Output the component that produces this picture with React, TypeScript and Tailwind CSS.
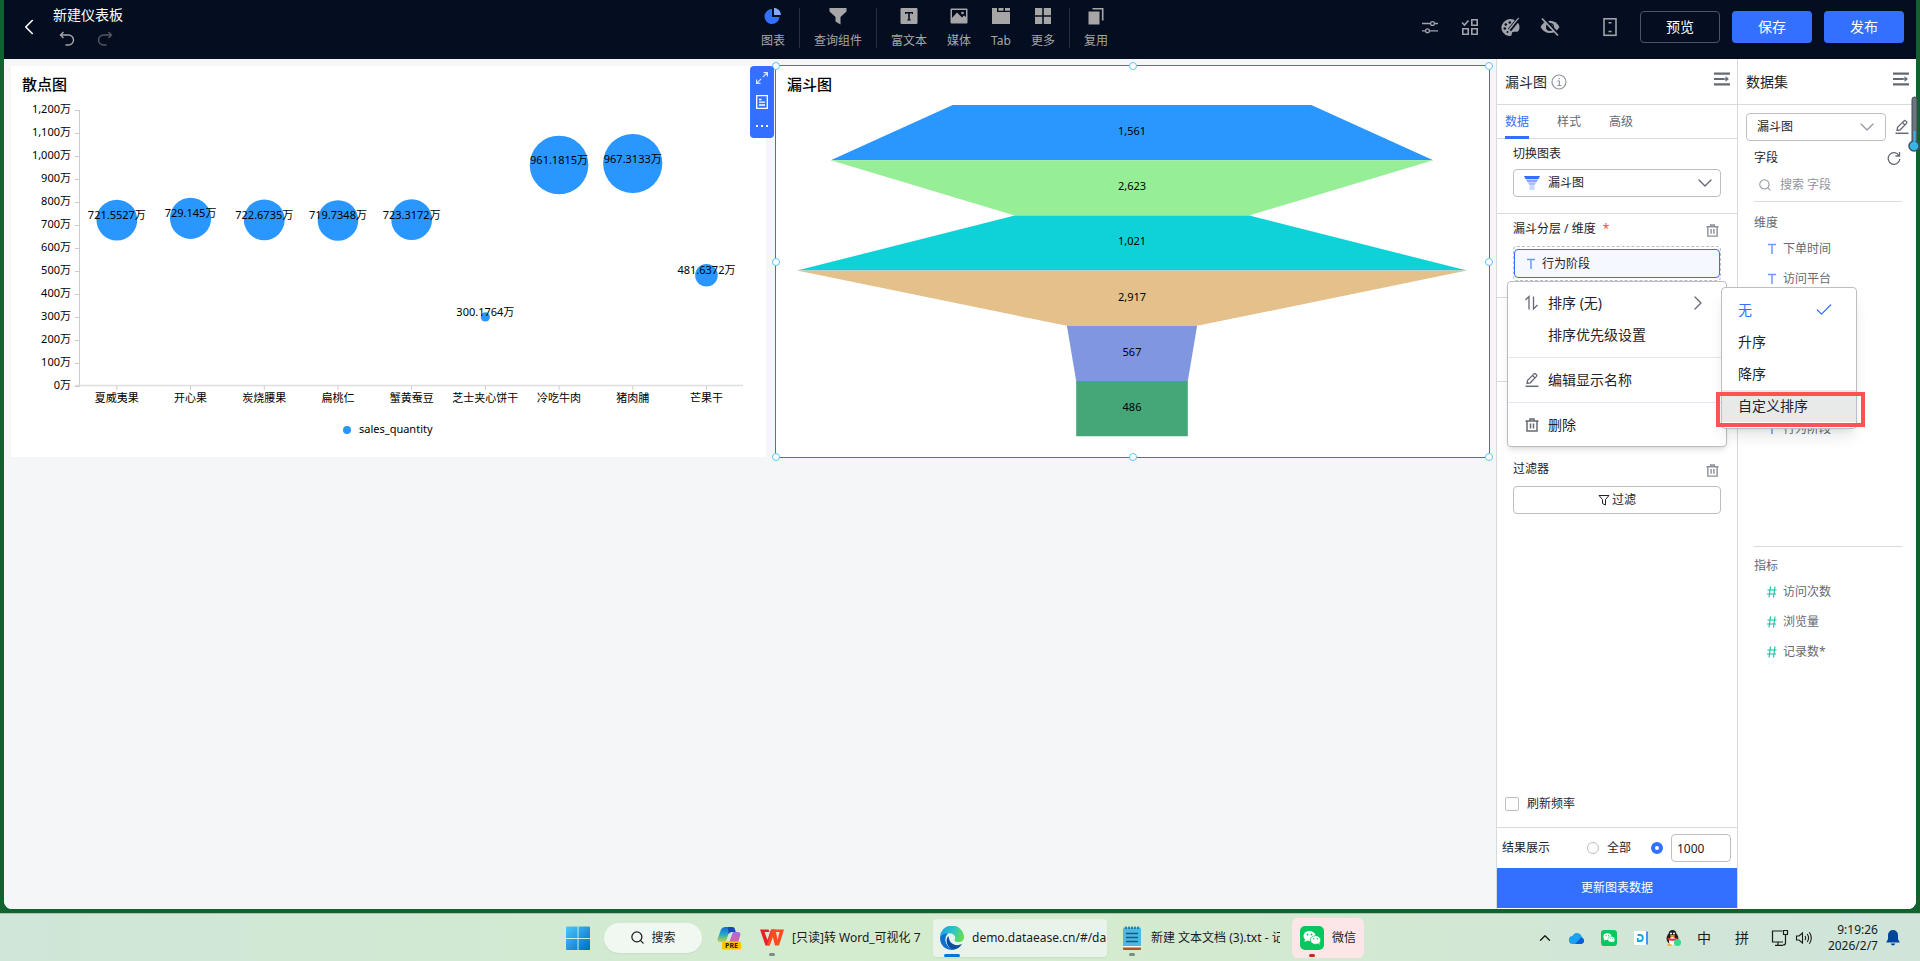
import type { ReactNode } from 'react';
import { ChevronDown, ChevronLeft, ChevronRight, ChevronUp, Check, Search } from 'lucide-react';

type Point = { name: string; value: number; r: number };

const scatter: Point[] = [
  { name: '夏威夷果', value: 721.5527, r: 20.4 },
  { name: '开心果', value: 729.145, r: 20.6 },
  { name: '炭烧腰果', value: 722.6735, r: 20.4 },
  { name: '扁桃仁', value: 719.7348, r: 20.3 },
  { name: '蟹黄蚕豆', value: 723.3172, r: 20.4 },
  { name: '芝士夹心饼干', value: 300.1764, r: 4.6 },
  { name: '冷吃牛肉', value: 961.1815, r: 29.3 },
  { name: '猪肉脯', value: 967.3133, r: 29.6 },
  { name: '芒果干', value: 481.6372, r: 11.3 },
];

const funnel = [
  { value: 1561, color: '#2997ff' },
  { value: 2623, color: '#96ef96' },
  { value: 1021, color: '#0fd2d8' },
  { value: 2917, color: '#e4c08a' },
  { value: 567, color: '#8096e0' },
  { value: 486, color: '#45a678' },
];

const ticks = [1200, 1100, 1000, 900, 800, 700, 600, 500, 400, 300, 200, 100, 0];

function ScatterChart() {
  const left = 69;
  const base = 286;
  const step = 73.7;
  const y = (v: number) => base - (v / 1200) * 276;
  return (
    <svg viewBox="0 0 755 357" className="block w-full text-[11px]" fill="#000">
      <path d={`M${left - 0.5} 10V${base}`} stroke="#ccc" />
      <path d={`M${left - 5} ${base - 0.5}H732`} stroke="#ddd" strokeWidth="1.5" />
      {ticks.map(t => (
        <g key={t}>
          <path d={`M${left - 5} ${y(t) + 0.5}h5`} stroke="#ccc" />
          <text x={left - 9} y={y(t) + 3} textAnchor="end">{t.toLocaleString('en-US')}万</text>
        </g>
      ))}
      {scatter.map((p, i) => {
        const x = left + step * (i + 0.5);
        return (
          <g key={p.name}>
            <path d={`M${x} ${base}v4`} stroke="#ccc" />
            <circle cx={x} cy={y(p.value)} r={p.r} fill="#2997ff" />
            <text x={x} y={base + 16} textAnchor="middle">{p.name}</text>
          </g>
        );
      })}
      {scatter.map((p, i) => (
        <text key={p.name} x={left + step * (i + 0.5)} y={y(p.value) - 1} textAnchor="middle">{p.value}万</text>
      ))}
      <circle cx="336" cy="330" r="4" fill="#2997ff" />
      <text x="348" y="333">sales_quantity</text>
    </svg>
  );
}

function FunnelChart() {
  const cx = 356;
  const half = (v: number) => (v / 2917) * 335;
  const h = 55.2;
  return (
    <svg viewBox="0 0 713 357" className="block w-full text-[11px]" fill="#000">
      {funnel.map((f, i) => {
        const top = 5 + i * h;
        const a = half(f.value);
        const b = half((funnel[i + 1] ?? f).value);
        return (
          <g key={f.value}>
            <polygon points={`${cx - a},${top} ${cx + a},${top} ${cx + b},${top + h} ${cx - b},${top + h}`} fill={f.color} />
            <text x={cx} y={top + 30} textAnchor="middle">{f.value.toLocaleString('en-US')}</text>
          </g>
        );
      })}
    </svg>
  );
}

function Tool({ label, children }: { label: string; children: ReactNode }) {
  return (
    <button className="flex flex-col items-center gap-2 text-xs leading-4 text-[#a6a6a6]">
      <svg width="18" height="18" viewBox="0 0 18 18" fill="#a6a6a6">{children}</svg>
      {label}
    </button>
  );
}

function Divider() {
  return <span className="mx-[14px] h-10 w-px bg-[#262e3f]" />;
}

function Trash({ size = 14, color = '#8a8f98' }: { size?: number; color?: string }) {
  return (
    <svg width={size} height={size} viewBox="0 0 14 14" fill="none" stroke={color} strokeWidth="1.5">
      <path d="M.5 3h13M5 2.500V1h4v1.500M2 3v10h10V3M5.500 5.500v5M8.500 5.500v5" />
    </svg>
  );
}

function Pencil({ color = '#646a73' }: { color?: string }) {
  return (
    <svg width="16" height="16" viewBox="0 0 16 16" fill="none" stroke={color} strokeWidth="1.3">
      <path d="M3 11.500l.6-3.200L10 1.900q.8-.7 1.600 0l.9.9q.7.8 0 1.600L6.200 10.800z" />
      <path d="M8.500 3.500l2.500 2.500" />
      <path d="M1.500 14.300h13" strokeWidth="1.500" />
    </svg>
  );
}

function FoldIcon() {
  return (
    <svg width="16" height="14" viewBox="0 0 16 14" fill="#646a73">
      <path d="M0 .5h16v2.200H0zM0 5.900h10.500v2.200H0zM0 11.300h16v2.200H0zM9 6.400h3.500v1.200H9zM11.500 4.200L15 7l-3.500 2.800z" />
    </svg>
  );
}

function Handle({ className }: { className: string }) {
  return <span className={`absolute size-2 rounded-full border border-[#59c7f9] bg-white ${className}`} />;
}

function Header() {
  return (
    <header className="grid h-[59px] shrink-0 grid-cols-[1fr_auto_1fr] items-center bg-[#050e21]">
      <div className="flex items-center">
        <button aria-label="返回" className="ml-3 text-white"><ChevronLeft size={26} strokeWidth={1.5} className="mt-[-5px]" /></button>
        <div className="ml-[11px] flex flex-col pb-1.5">
          <h1 className="text-sm leading-4 text-white">新建仪表板</h1>
          <div className="mt-2 flex gap-[22px] pl-1.5">
            <button aria-label="撤销">
              <svg width="16" height="16" viewBox="0 0 16 16" fill="none" stroke="#a6a6a6" strokeWidth="1.400">
                <path d="M4.500 1L1.500 4l3 3M1.500 4h8a5 5 0 0 1 0 10H6.500" />
              </svg>
            </button>
            <button aria-label="重做">
              <svg width="16" height="16" viewBox="0 0 16 16" fill="none" stroke="#55585f" strokeWidth="1.400">
                <path d="M11.500 1l3 3-3 3M14.500 4h-8a5 5 0 0 0 0 10h3" />
              </svg>
            </button>
          </div>
        </div>
      </div>

      <nav className="flex items-center pr-[51px] pb-[3px]">
        <Tool label="图表">
          <path d="M8 2a7.500 7.500 0 1 0 7.500 8H8z" fill="#3370ff" />
          <path d="M10 .8A7.500 7.500 0 0 1 17 8h-7z" fill="#85a9ff" />
        </Tool>
        <Divider />
        <Tool label="查询组件"><path d="M.5 1h17v3.500L11.500 10v7.500L6.500 14.500V10L.5 4.500z" /></Tool>
        <Divider />
        <div className="flex gap-5">
          <Tool label="富文本">
            <rect x=".5" y="1" width="17" height="16" rx="1" />
            <path d="M5 5h8v2H12V6.500H9.800v6h1v1H7.200v-1h1v-6H6V7H5z" fill="#050e21" />
          </Tool>
          <Tool label="媒体">
            <rect x=".5" y="1.500" width="17" height="15" rx="1" />
            <path d="M2 3h14v7l-2-1.500-2 2-5-5-5 5.500z" fill="#050e21" />
            <circle cx="12.500" cy="6" r="1.300" />
          </Tool>
          <Tool label="Tab"><path d="M0 1h5v4h13v12H0zM6.500 1h5v2.800h-5zM13 1h5v2.800h-5z" /></Tool>
          <Tool label="更多"><path d="M1 1h7.200v7.200H1zM9.800 1H17v7.200H9.800zM1 9.800h7.200V17H1zM9.800 9.800H17V17H9.800z" /></Tool>
        </div>
        <Divider />
        <Tool label="复用"><path d="M1.500 4.500h11v13h-11zM5.500 1h11v12.500h-1.600V2.600H5.500z" /></Tool>
      </nav>

      <div className="flex items-center justify-end gap-3 pr-3 pb-[5px]">
        <div className="mr-7 flex gap-5">
          <svg width="20" height="20" viewBox="0 0 20 20" fill="none" stroke="#a0a3a9" strokeWidth="1.300">
            <path d="M2 6.500h8.500M14.500 6.500H18M2 13.800h3.500M9.500 13.800H18" />
            <circle cx="12.500" cy="6.500" r="1.900" />
            <circle cx="7.500" cy="13.800" r="1.900" />
          </svg>
          <svg width="20" height="20" viewBox="0 0 20 20" fill="none" stroke="#a0a3a9" strokeWidth="1.600">
            <path d="M2 5.500l2.500 2.500L8.500 3.500M11.800 2.800h5.400v5.400h-5.400zM2.800 11.800h5.400v5.400H2.800zM11.800 11.800h5.400v5.400h-5.400z" />
          </svg>
          <svg width="20" height="20" viewBox="0 0 20 20">
            <path d="M14 2.800A9 8.500 0 1 0 9 19q3 .3 2.700-2-.2-2.300 2.300-2.300h3Q19.500 14 19.500 10q0-2-1-3.500z" fill="#a0a3a9" />
            <g fill="#050e21">
              <circle cx="4.800" cy="11.500" r="1.300" /><circle cx="5.800" cy="7.500" r="1.300" /><circle cx="9.800" cy="5.500" r="1.300" /><circle cx="7.500" cy="15" r="1" />
            </g>
            <path d="M18.500 2L9.500 13" stroke="#050e21" strokeWidth="4" />
            <path d="M19.500.8L11 11.500q-1.500 1-2.500 2.500.2-2.500 1.500-3.800L17.800 1z" fill="#a0a3a9" />
          </svg>
          <svg width="20" height="20" viewBox="0 0 20 20">
            <path d="M.5 10Q4 3.800 10 3.800T19.500 10Q16 16 10 16T.5 10z" fill="#a0a3a9" />
            <circle cx="10" cy="10" r="4" fill="#050e21" />
            <circle cx="11" cy="9.500" r="2" fill="#a0a3a9" />
            <path d="M3.500.5l15.500 17" stroke="#050e21" strokeWidth="2" />
            <path d="M2 1.500l16 17" stroke="#a0a3a9" strokeWidth="1.800" />
          </svg>
        </div>
        <svg width="20" height="20" viewBox="0 0 20 20" fill="none" stroke="#a0a3a9" strokeWidth="1.600" className="mr-2">
          <rect x="4" y="1.800" width="12" height="16.500" />
          <path d="M8.500 5.800h3M8.500 14.500h3" />
        </svg>
        <button className="h-8 w-20 rounded-sm border border-[#4d5463] text-sm text-white">预览</button>
        <button className="h-8 w-20 rounded-sm bg-[#3370ff] text-sm text-white">保存</button>
        <button className="h-8 w-20 rounded-sm bg-[#3370ff] text-sm text-white">发布</button>
      </div>
    </header>
  );
}

function Canvas() {
  return (
    <main className="min-w-0 flex-1 bg-[#f5f6f7] pt-1.5 pr-1.5 pl-[7px]">
      <div className="grid grid-cols-[755fr_715fr] items-start gap-[9px]">
        <section className="mt-px bg-white">
          <h2 className="px-[11px] pt-2 pb-1.5 text-[15px] leading-5 font-medium text-black">散点图</h2>
          <ScatterChart />
        </section>
        <section className="relative border border-[#3370ff] bg-white">
          <h2 className="px-[11px] pt-2 pb-1.5 text-[15px] leading-5 font-medium text-black">漏斗图</h2>
          <FunnelChart />
          <Handle className="-top-1 -left-1" />
          <Handle className="-top-1 left-1/2 -translate-x-1/2" />
          <Handle className="-top-1 -right-1" />
          <Handle className="top-1/2 -left-1 -translate-y-1/2" />
          <Handle className="top-1/2 -right-1 -translate-y-1/2" />
          <Handle className="-bottom-1 -left-1" />
          <Handle className="-bottom-1 left-1/2 -translate-x-1/2" />
          <Handle className="-right-1 -bottom-1" />
          <div className="absolute top-0 right-full mr-0.5 flex w-6 flex-col rounded-sm bg-[#3370ff]">
            <button aria-label="放大" className="flex h-6 items-center justify-center">
              <svg width="12" height="12" viewBox="0 0 12 12" fill="none" stroke="#d6e2ff" strokeWidth="1.200">
                <path d="M7.500.6h3.900v3.900M11.200.8L6.800 5.200M4.500 11.400H.6V7.500M.8 11.200l4.400-4.400" />
              </svg>
            </button>
            <button aria-label="查看数据" className="flex h-6 items-center justify-center">
              <svg width="12" height="14" viewBox="0 0 12 14" fill="none" stroke="#fff" strokeWidth="1.300">
                <path d="M.7.7h10.600v12.600H.7zM3 4.500h2.500M3 7.200h6M3 10h6" />
              </svg>
            </button>
            <button aria-label="更多" className="flex h-6 items-center justify-center gap-[3px]">
              <span className="size-0.5 bg-white" /><span className="size-0.5 bg-white" /><span className="size-0.5 bg-white" />
            </button>
          </div>
        </section>
      </div>
    </main>
  );
}

function SortSubmenu() {
  return (
    <div className="absolute top-[5px] left-[213px] w-34 rounded-sm border border-[#bbbfc4] bg-white py-1.5 text-sm text-[#1f2329] shadow-lg">
      <button className="flex h-8 w-full items-center justify-between pr-[22px] pl-4 text-[#3370ff]">
        无<Check size={20} strokeWidth={1.5} />
      </button>
      <button className="flex h-8 w-full items-center pl-4">升序</button>
      <button className="flex h-8 w-full items-center pl-4">降序</button>
      <button className="relative flex h-8 w-full items-center bg-[#e8e9e9] pl-4">
        自定义排序
        <span className="absolute top-0.5 -right-[9px] -bottom-[5px] -left-1.5 border-4 border-[#ff5252]" />
      </button>
    </div>
  );
}

function FieldMenu() {
  return (
    <div className="absolute top-full -left-[7px] z-20 mt-px w-55 rounded-sm border border-[#bbbfc4] bg-white py-[5px] text-sm text-[#1f2329] shadow-md">
      <button className="flex h-8 w-full items-center gap-2 pr-4 pl-4">
        <svg width="16" height="16" viewBox="0 0 16 16" fill="none" stroke="#646a73" strokeWidth="1.300">
          <path d="M1.500 5L5 1.500V14.500M9.500 1.500V14l4-4" />
        </svg>
        <span className="flex-1 text-left">排序 (无)</span>
        <ChevronRight size={24} strokeWidth={1.3} color="#646a73" />
      </button>
      <button className="flex h-8 w-full items-center pl-10">排序优先级设置</button>
      <hr className="my-1.5 border-[#e4e7ef]" />
      <button className="flex h-8 w-full items-center gap-2 pl-4"><Pencil />编辑显示名称</button>
      <hr className="my-1.5 border-[#e4e7ef]" />
      <button className="flex h-8 w-full items-center gap-2 pl-4">
        <span className="px-px"><Trash color="#646a73" /></span>删除
      </button>
      <SortSubmenu />
    </div>
  );
}

function ChartPanel() {
  return (
    <aside className="relative z-10 flex w-[241px] shrink-0 flex-col border-l border-[#d9dadc] bg-white text-xs text-[#1f2329]">
      <div className="flex h-[46px] items-center justify-between border-b border-[#d9dadc] pr-[7px] pl-2">
        <h2 className="flex items-center gap-1 text-sm">
          漏斗图
          <svg width="16" height="16" viewBox="0 0 16 16" fill="none" stroke="#8f959e" strokeWidth="1.200">
            <circle cx="8" cy="8" r="7" />
            <path d="M6.500 7H8.300v4.500M6.300 11.500h4M7.500 4.700h1.300" />
          </svg>
        </h2>
        <button aria-label="收起" className="pb-1.5"><FoldIcon /></button>
      </div>
      <div className="flex h-[34px] gap-7 border-b border-[#d9dadc] pl-2 text-[#646a73]">
        <button className="-mb-px border-b-3 border-[#3370ff] pt-[3px] text-[#3370ff]">数据</button>
        <button>样式</button>
        <button>高级</button>
      </div>

      <div className="border-b border-[#d9dadc] px-4 pt-1.5 pb-4">
        <label htmlFor="chart-type" className="block h-6 leading-[18px]">切换图表</label>
        <div className="relative">
          <select id="chart-type" className="block h-7 w-full appearance-none rounded-sm border border-[#bbbfc4] bg-white pl-[34px] text-xs">
            <option>漏斗图</option>
          </select>
          <svg width="18" height="14" viewBox="0 0 18 14" className="absolute top-[7px] left-[10px]">
            <path d="M1 0h16l-1.500 3h-13z" fill="#3370ff" />
            <path d="M2.800 3.500h12.400l-2 3H4.800z" fill="#85a9ff" />
            <path d="M5.200 7h7.600l-1.400 2.500H6.600z" fill="#a6c0ff" />
            <path d="M6.500 10h5v4h-5z" fill="#c7d8ff" />
          </svg>
          <ChevronDown size={24} strokeWidth={1.4} color="#646a73" className="pointer-events-none absolute top-0.5 right-1" />
        </div>
      </div>

      <div className="border-b border-[#d9dadc] px-4 pt-1.5 pb-4">
        <div className="flex h-[26px] items-start justify-between pr-0.5">
          <span className="leading-[18px]">漏斗分层 / 维度 <span className="ml-1 text-[#f54a45]">*</span></span>
          <button aria-label="清空维度" className="pt-1"><Trash size={13} /></button>
        </div>
        <div className="relative rounded-sm border border-dashed border-[#bbbfc4] py-0.5">
          <button className="flex h-[29px] w-full items-center gap-1.5 rounded-sm border border-[#3370ff] bg-[#f5f8ff] pl-[11px] text-xs">
            <TextIcon />行为阶段
          </button>
          <FieldMenu />
        </div>
      </div>
      <div className="h-[84px] border-b border-[#d9dadc]" />

      <div className="px-4 pt-[78px]">
        <div className="flex h-[26px] items-start justify-between pr-0.5">
          <span className="leading-[18px]">过滤器</span>
          <button aria-label="清空过滤器" className="pt-1"><Trash size={13} /></button>
        </div>
        <button className="flex h-7 w-full items-center justify-center gap-0.5 rounded-sm border border-[#bbbfc4]">
          <svg width="12" height="12" viewBox="0 0 12 12" fill="none" stroke="#1f2329">
            <path d="M1 1.500h10L7.500 5.500v5.500l-3-1.500v-4z" />
          </svg>
          过滤
        </button>
      </div>

      <div className="mt-auto border-b border-[#d9dadc] px-2 pb-[14px]">
        <label className="flex items-center gap-2 leading-[18px]">
          <input type="checkbox" className="size-[14px] appearance-none rounded-xs border border-[#bbbfc4]" />
          刷新频率
        </label>
      </div>
      <div className="flex h-10 items-center pr-1.5 pl-[5px]">
        <span className="flex-1">结果展示</span>
        <label className="flex items-center gap-2">
          <input type="radio" name="limit" className="size-3 appearance-none rounded-full border border-[#bbbfc4]" />
          全部
        </label>
        <input type="radio" name="limit" aria-label="自定义条数" defaultChecked className="ml-5 size-3 appearance-none rounded-full border-4 border-[#3370ff] bg-white" />
        <input aria-label="条数" defaultValue="1000" className="ml-2 h-7 w-15 rounded-sm border border-[#bbbfc4] px-[5px] text-xs" />
      </div>
      <button className="mb-px h-10 shrink-0 bg-[#3370ff] text-white">更新图表数据</button>
    </aside>
  );
}

function TextIcon() {
  return (
    <svg width="10" height="12" viewBox="0 0 10 12" fill="none" stroke="#6f98ff" strokeWidth="1.500">
      <path d="M1 1.500h8M5 1.500V11" />
    </svg>
  );
}

function HashIcon() {
  return (
    <svg width="10" height="12" viewBox="0 0 10 12" fill="none" stroke="#14c0a5" strokeWidth="1.100">
      <path d="M3.500.5L2 11.500M8 .5L6.500 11.500M.5 4h9M0 8h9" />
    </svg>
  );
}

function Field({ icon, name }: { icon: ReactNode; name: string }) {
  return <li className="flex h-[30px] items-center gap-1.5 pl-[13px]">{icon}{name}</li>;
}

function DatasetPanel() {
  return (
    <aside className="flex w-[179px] shrink-0 flex-col border-l border-[#d9dadc] bg-white text-xs text-[#1f2329]">
      <div className="flex h-[46px] shrink-0 items-center justify-between border-b border-[#d9dadc] pr-[7px] pl-2">
        <h2 className="text-sm">数据集</h2>
        <button aria-label="收起" className="pb-1.5"><FoldIcon /></button>
      </div>
      <div className="flex items-center gap-2 px-2 pt-2">
        <div className="relative w-35 shrink-0">
          <select aria-label="数据集" className="block h-7 w-full appearance-none rounded-sm border border-[#bbbfc4] bg-white pl-[10px] text-xs">
            <option>漏斗图</option>
          </select>
          <ChevronDown size={24} strokeWidth={1.2} color="#8f959e" className="pointer-events-none absolute top-0.5 right-[7px]" />
        </div>
        <button aria-label="编辑数据集" className="shrink-0"><Pencil /></button>
      </div>
      <div className="flex items-center justify-between pt-2 pr-[15px] pl-4 leading-[18px]">
        字段
        <button aria-label="刷新">
          <svg width="14" height="14" viewBox="0 0 14 14" fill="none" stroke="#646a73" strokeWidth="1.300">
            <path d="M12 4.500A5.800 5.800 0 1 0 12.800 8M12.500 1v4h-4" />
          </svg>
        </button>
      </div>
      <label className="mr-[14px] ml-4 flex h-[35px] items-center gap-2 border-b border-[#d9dadc] pt-0.5 pl-1">
        <Search size={14} strokeWidth={1.8} color="#8f959e" className="shrink-0" />
        <input placeholder="搜索 字段" className="w-full min-w-0 text-xs placeholder:text-[#8f959e]" />
      </label>
      <div className="mr-[14px] ml-4 text-[#646a73]">
        <h3 className="pt-3 leading-[18px]">维度</h3>
        <ul className="pt-0.5">
          <Field icon={<TextIcon />} name="下单时间" />
          <Field icon={<TextIcon />} name="访问平台" />
        </ul>
        <ul className="mt-30 border-b border-[#d9dadc] pb-[102px]">
          <Field icon={<TextIcon />} name="行为阶段" />
        </ul>
        <h3 className="pt-2.5 leading-[18px]">指标</h3>
        <ul className="pt-0.5">
          <Field icon={<HashIcon />} name="访问次数" />
          <Field icon={<HashIcon />} name="浏览量" />
          <Field icon={<HashIcon />} name="记录数*" />
        </ul>
      </div>
    </aside>
  );
}

function WeChatIcon({ size }: { size: number }) {
  return (
    <svg width={size} height={size} viewBox="0 0 24 24" className="shrink-0">
      <rect width="24" height="24" rx="5" fill="#07c75f" />
      <ellipse cx="9.500" cy="10" rx="6" ry="5" fill="#fff" />
      <path d="M5 13l-.5 3 3-1.500z" fill="#fff" />
      <ellipse cx="15.500" cy="14" rx="5.200" ry="4.300" fill="#fff" stroke="#07c75f" strokeWidth=".7" />
      <path d="M18 17l1.500 2-.2-3z" fill="#fff" />
      <g fill="#07c75f">
        <circle cx="7.500" cy="8.500" r=".9" /><circle cx="11.500" cy="8.500" r=".9" />
        <circle cx="13.800" cy="12.800" r=".7" /><circle cx="17.200" cy="12.800" r=".7" />
      </g>
    </svg>
  );
}

function Taskbar() {
  return (
    <footer className="grid h-12 shrink-0 grid-cols-[1fr_auto_1fr] items-center border-t border-[#a9c4b0] bg-linear-to-r from-[#cfe6d8] via-[#d4eccd] to-[#d0e4da] text-xs text-[#1b1b1b]">
      <span />
      <div className="flex h-full items-center pl-2.5">
        <button aria-label="开始">
          <svg width="24" height="24" viewBox="0 0 24 24">
            <defs>
              <linearGradient id="win" x1="0" y1="0" x2="1" y2="1">
                <stop offset="0" stopColor="#4cc9fb" /><stop offset="1" stopColor="#0067c8" />
              </linearGradient>
            </defs>
            <path d="M0 1.500Q0 .5 1 .5h10.500v11.500H0zM12.500.5H23q1 0 1 1V12H12.500zM0 13h11.500v11H1q-1 0-1-1zM12.500 13H24v10q0 1-1 1H12.500z" fill="url(#win)" />
          </svg>
        </button>
        <button className="ml-[14px] flex h-[30px] w-[98px] items-center justify-center gap-1.5 rounded-full bg-[#f0f8f1] shadow-xs">
          <Search size={15} strokeWidth={2} />搜索
        </button>
        <button aria-label="Copilot" className="ml-[15px]">
          <svg width="24" height="24" viewBox="0 0 24 24">
            <defs>
              <linearGradient id="cop1" x1="0" y1="0" x2="0" y2="1">
                <stop offset="0" stopColor="#1668d8" /><stop offset=".5" stopColor="#25a9c8" /><stop offset="1" stopColor="#c9d33c" />
              </linearGradient>
              <linearGradient id="cop2" x1="0" y1="0" x2="0" y2="1">
                <stop offset="0" stopColor="#a26bf0" /><stop offset="1" stopColor="#f2607c" />
              </linearGradient>
            </defs>
            <path d="M8 1h7q2.500 0 3 3l.6 2h-4Q12 6 11 9l-1.500 5q-.6 2-2.500 2H3Q0 16 .6 13L4 3.500Q5 1 8 1z" fill="url(#cop1)" />
            <path d="M16 6h4.500Q24 6 23.300 9l-2 7q-.8 3-3.300 3H9q2.500-.5 3.300-3z" fill="url(#cop2)" />
            <path d="M11 1h4q2.500 0 3 3l.6 2h-4q-2 0-3 2z" fill="#1746b8" />
            <rect x="5" y="15.500" width="19" height="8" rx="1.500" fill="#ffc400" />
            <text x="14.500" y="22" textAnchor="middle" className="text-[7px] font-bold" fill="#222">PRE</text>
          </svg>
        </button>
        <button className="relative ml-[19px] flex h-10 w-[173px] items-center gap-2">
          <svg width="24" height="17" viewBox="0 0 24 17" className="shrink-0">
            <path d="M0 .5h8.500l1 2.500H4.500l3 8L11 .5h4.500L9.500 16.500H5.500z" fill="#e8202a" />
            <path d="M11.500.5h4l2 10.500 2-8h-4.500l.8-2.500H24L19 16.500h-4l-2.300-9-3.200 9H7z" fill="#ff4a1f" />
          </svg>
          <span className="whitespace-nowrap">[只读]转 Word_可视化 7</span>
          <span className="absolute bottom-0.5 left-[9px] h-[3px] w-1.5 rounded-full bg-[#7c8a80]" />
        </button>
        <button className="relative flex h-[38px] w-[174px] items-center gap-2 rounded-sm bg-[#e8f3ea] pl-[7px] shadow-xs">
          <svg width="24" height="24" viewBox="0 0 24 24" className="shrink-0">
            <defs>
              <linearGradient id="edge" x1="0" y1="0" x2="1" y2=".3">
                <stop offset="0" stopColor="#1c9ce0" /><stop offset=".6" stopColor="#2cc4c8" /><stop offset="1" stopColor="#5fdc5a" />
              </linearGradient>
            </defs>
            <path d="M0 12A12 12 0 0 1 24 11q0 5-5.500 5-4 0-4-2 1.500-2 0-4.500Q12 6.500 8 7.500 2 8.500 0 12z" fill="url(#edge)" />
            <path d="M0 12Q2 7 8 7.500q-3.500 3-2.500 8 1.500 6 8 8.200Q10 24.500 6 22.500 0 19 0 12z" fill="#0f6fcf" />
            <path d="M8.500 10q-3 3-1.500 7.500Q9 23 13.500 23.700 19 23 22 18q-4 1.800-7.500.8Q9 17 8.500 10z" fill="#0b4f9e" />
          </svg>
          <span className="whitespace-nowrap">demo.dataease.cn/#/da</span>
          <span className="absolute bottom-0 left-[11px] h-[3px] w-4 rounded-full bg-[#0078d4]" />
        </button>
        <button className="relative ml-[13px] flex h-10 w-[160px] items-center gap-[7px]">
          <svg width="24" height="24" viewBox="0 0 24 24" className="shrink-0">
            <rect x="3" y="1.500" width="18" height="20" rx="1" fill="#4db9e2" />
            <path d="M3 20.500h18V23q0 1-1 1H4q-1 0-1-1z" fill="#b5531a" />
            <path d="M3 20h18v1.500H3z" fill="#f4f4f4" />
            <path d="M6 7.500h12M6 11.500h12M6 15.500h12" stroke="#0c5f86" strokeWidth="1.500" />
            <path d="M6 .5v2.500M9 .5v2.500M12 .5v2.500M15 .5v2.500M18 .5v2.500" stroke="#0c5f86" strokeWidth="1.300" />
          </svg>
          <span className="flex-1 overflow-hidden text-left whitespace-nowrap">新建 文本文档 (3).txt - 记</span>
          <span className="absolute bottom-0.5 left-[9px] h-[3px] w-1.5 rounded-full bg-[#7c8a80]" />
        </button>
        <button className="relative ml-3 flex h-10 w-[72px] items-center gap-2 rounded-md bg-[#fde6e8] px-2">
          <WeChatIcon size={24} />微信
          <span className="absolute bottom-px left-[17px] h-[3px] w-1.5 rounded-full bg-[#c42b1c]" />
        </button>
      </div>

      <div className="flex items-center justify-end pr-5">
        <ChevronUp size={18} strokeWidth={1.8} className="mr-[15px]" />
        <svg width="16" height="16" viewBox="0 0 16 16" className="mr-4">
          <path d="M4 14a4 4 0 0 1-.5-8A5 5 0 0 1 12 5l3 6-3 3z" fill="#1ba1f2" />
          <path d="M6 14l6-6.500a3.300 3.300 0 0 1 .5 6.500z" fill="#0a5fd6" />
        </svg>
        <span className="mr-4"><WeChatIcon size={16} /></span>
        <svg width="16" height="16" viewBox="0 0 16 16" className="mr-4">
          <rect x="1" y="1" width="12" height="14" rx="1" fill="#fff" />
          <path d="M14 1.500v13" stroke="#1677ff" strokeWidth="1.500" />
          <path d="M4.500 5H7q2.800 0 2.800 3T7 11H4.800V8" fill="none" stroke="#16a6e8" strokeWidth="1.800" />
        </svg>
        <svg width="16" height="16" viewBox="0 0 16 16" className="mr-4">
          <ellipse cx="7.500" cy="8.500" rx="6" ry="6" fill="#1d1d1d" />
          <ellipse cx="7.500" cy="4.500" rx="4" ry="4.500" fill="#1d1d1d" />
          <ellipse cx="7.500" cy="11" rx="3.600" ry="4" fill="#fff" />
          <path d="M2.500 7.500q5 2.500 10 0v2q-5 2.500-10 0z" fill="#e8262d" />
          <circle cx="6" cy="3.500" r="1" fill="#fff" /><circle cx="9" cy="3.500" r="1" fill="#fff" />
          <ellipse cx="7.500" cy="6" rx="2.500" ry=".9" fill="#f7a51c" />
          <path d="M2.500 15h4" stroke="#f7a51c" strokeWidth="1.500" />
          <circle cx="12.500" cy="12.500" r="3.500" fill="#2ee08a" />
        </svg>
        <span className="mr-6 text-sm">中</span>
        <span className="mr-[22px] text-sm">拼</span>
        <svg width="18" height="18" viewBox="0 0 18 18" fill="none" stroke="#1b1b1b" strokeWidth="1.200" className="mr-1.5">
          <path d="M11.500 2H1.500v11h10.500M7 13v3M4 16.300h8M12.500 1.500h4v4h-4zM14.500 5.500V14q0 2-2.500 2" />
        </svg>
        <svg width="18" height="18" viewBox="0 0 18 18" fill="none" stroke="#1b1b1b" strokeWidth="1.100" className="mr-[15px]">
          <path d="M1.500 7v4h2.500l3.500 3V4L4 7zM10 7q1.300 2 0 4M12.200 5q2.800 4 0 8M14.300 3.300q4 5.700 0 11.400" />
        </svg>
        <div className="text-right leading-4">
          <div>9:19:26</div>
          <div>2026/2/7</div>
        </div>
        <svg width="14" height="16" viewBox="0 0 14 16" fill="#00479b" className="ml-2">
          <path d="M7 0a5 5 0 0 1 5 5v4l1.800 3.500H.2L2 9V5a5 5 0 0 1 5-5zM4.800 13.500h4.400Q8.800 15.500 7 15.500t-2.200-2z" />
        </svg>
      </div>
    </footer>
  );
}

export default function App() {
  return (
    <div className="flex h-screen flex-col bg-[#11622f] font-['Noto_Sans','Noto_Sans_CJK_SC',sans-serif]">
      <div className="relative mx-1 mb-1 flex min-h-0 flex-1 flex-col overflow-hidden rounded-b-lg bg-white">
        <Header />
        <div className="flex min-h-0 flex-1">
          <Canvas />
          <ChartPanel />
          <DatasetPanel />
        </div>
      </div>
      {/* floating gauge on the window edge */}
      <svg width="12" height="58" viewBox="0 0 12 58" className="absolute top-24 right-0 z-30">
        <rect x="4" y="1" width="5" height="50" rx="2.500" fill="#6b7780" stroke="#414c55" />
        <circle cx="6" cy="50" r="5" fill="#35b5e9" stroke="#41525f" strokeWidth="1.500" />
        <path d="M6.500 35v12" stroke="#35b5e9" strokeWidth="2" />
      </svg>
      <Taskbar />
    </div>
  );
}
